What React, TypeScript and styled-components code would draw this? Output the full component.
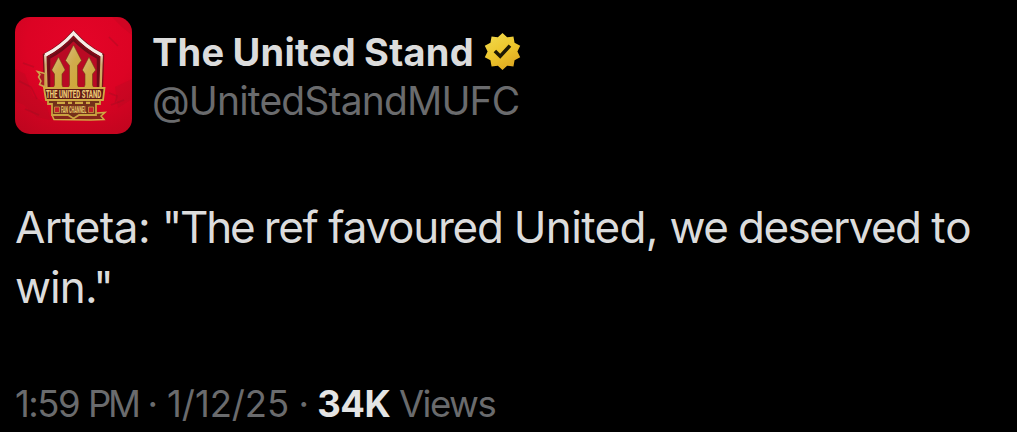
import styled, { createGlobalStyle } from "styled-components";

const GlobalStyle = createGlobalStyle`
    * {
        box-sizing: border-box;
    }
    body {
        margin: 0;
        background-color: #000000;
        font-family: Inter, "Liberation Sans", sans-serif;
    }
`;

const Wrapper = styled.article`
    display: flex;
    flex-direction: column;
    height: 432px;
    padding: 17px 15px 0;
    overflow: hidden;
    background-color: #000000;
    color: #dcdcdc;
`;

const Header = styled.header`
    display: flex;
    align-items: flex-start;
    gap: 20px;
    height: 117px;
`;

const Avatar = styled.div`
    width: 117px;
    height: 117px;
    flex-shrink: 0;
    border-radius: 15px;
    overflow: hidden;
    svg {
        display: block;
    }
`;

const Names = styled.div`
    display: flex;
    flex-direction: column;
    padding-top: 10px;
`;

const NameRow = styled.div`
    display: flex;
    align-items: center;
    gap: 9px;
    height: 50px;
`;

const Name = styled.span`
    font-size: 38px;
    font-weight: 700;
    line-height: 50px;
    letter-spacing: 0.23px;
    word-spacing: -1px;
    white-space: nowrap;
`;

const Badge = styled.svg`
    width: 39px;
    height: 39px;
    margin-bottom: 1px;
`;

const Handle = styled.span`
    color: #6a6b6d;
    font-size: 39px;
    line-height: 48px;
    letter-spacing: -0.83px;
    white-space: nowrap;
`;

const Body = styled.p`
    margin: 63px 0 0;
    font-size: 44px;
    line-height: 60px;
`;

const Line = styled.span`
    display: block;
    white-space: pre;
`;

const Word = styled.span<{ $spacing: number }>`
    letter-spacing: ${({ $spacing }) => $spacing}px;
`;

const Meta = styled.footer`
    display: flex;
    margin-top: 65px;
    color: #6a6b6d;
    font-size: 36.5px;
    line-height: 44px;
    white-space: pre;
`;

const Count = styled.strong`
    color: #e4e4e4;
    font-weight: 700;
    letter-spacing: -0.5px;
`;

// text with its own tracking
const lines = [
    [
        { text: "Arteta: ", spacing: -0.6 },
        { text: '"The ', spacing: -2.2 },
        { text: "ref ", spacing: -1.4 },
        { text: "favoured ", spacing: -1.25 },
        { text: "United, ", spacing: -0.65 },
        { text: "we ", spacing: -1.6 },
        { text: "deserved ", spacing: -1.6 },
        { text: "to", spacing: 0 },
    ],
    [{ text: 'win."', spacing: -0.9 }],
];

function Crest() {
    return (
        <svg width="117" height="117" viewBox="0 0 117 117" aria-hidden="true">
            <defs>
                <radialGradient id="red" cx="0.55" cy="0.25" r="0.9">
                    <stop offset="0" stopColor="#e50428" />
                    <stop offset="0.5" stopColor="#dc0324" />
                    <stop offset="1" stopColor="#bd051e" />
                </radialGradient>
                <linearGradient id="gold" x1="0" y1="0" x2="0.6" y2="1">
                    <stop offset="0" stopColor="#d8bd7c" />
                    <stop offset="0.5" stopColor="#d0ab4c" />
                    <stop offset="1" stopColor="#cfa838" />
                </linearGradient>
                <linearGradient id="edge" x1="0" y1="0" x2="0" y2="1">
                    <stop offset="0" stopColor="#ffffff" />
                    <stop offset="0.35" stopColor="#ead9c8" />
                    <stop offset="0.55" stopColor="#d0ac70" />
                    <stop offset="1" stopColor="#cfa748" />
                </linearGradient>
            </defs>
            <rect width="117" height="117" fill="url(#red)" />
            <path d="M0 52l10 5 8 22 13 8 5 16-14-3L9 88 0 84zM97 0l10 10 10 8V0zM100 70l17-8v20l-14 9z" fill="#ad0b20" opacity="0.25" />
            <path d="M4 64l12 6 6 12M8 46l11 4M94 20l9 9M96 88l13-5M10 92l14 6M94 76l8 3-2 8" stroke="#8f1020" strokeWidth="1.5" opacity="0.3" fill="none" />
            {/* shield */}
            <path d="M31.500 73L30.300 38.500Q46 30.500 58.500 16.500Q71 30.500 86.700 38.500L85.500 73z" fill="#b90a24" stroke="#7a1018" strokeWidth="5" />
            <path d="M34 72V41Q47 34 58.500 22.500Q70 34 83 41v31" fill="none" stroke="#6e0c18" strokeWidth="2.500" />
            <path d="M31.500 73L30.300 38.500Q46 30.500 58.500 16.500Q71 30.500 86.700 38.500L85.500 73" fill="none" stroke="url(#edge)" strokeWidth="2.400" />
            <path d="M30.300 38Q46 30 58.500 16Q71 30 86.700 38" fill="none" stroke="#f6ece6" strokeWidth="3.200" />
            {/* trident */}
            <g fill="url(#gold)" stroke="#6f3a14" strokeWidth="0.6">
                <path d="M43.500 40l6.700 13-3.200 4v11l2 4.500H37.500l2-4.500V57l-2.800-4z" />
                <path d="M58.500 28L66.500 43.500 62.500 48.500V68l2 4.500H52.500l2-4.500V48.500L50.500 43.500z" />
                <path d="M74 40l6.700 13-3.200 4v11l2 4.500H68l2-4.500V57L67.300 53z" />
            </g>
            {/* ribbons */}
            <path d="M22.500 54.500l7.500 2V70l-5.500-2.500 1.500-3.500-2.500-4 1.500-2.500z" fill="#a81c22" stroke="#cda54c" strokeWidth="1.500" />
            <path d="M37 98l2 4.500 37 0.500 13-0.500-3-3.500 4-3.500-8 0.500z" fill="#86261a" stroke="#d0a943" strokeWidth="1.500" />
            <path d="M33 83h52v4h-4v11H64l-5.500 3.500L53 98H37V87h-4z" fill="#74301a" stroke="#c9a13f" strokeWidth="1.800" />
            <path d="M29 71h60.500l-1.500 12H31z" fill="#5f1a14" stroke="#d0a943" strokeWidth="1.800" />
            <text
                transform="translate(31 80.800) scale(0.62 1)"
                fontFamily="Roboto, sans-serif"
                fontSize="10"
                fontWeight="800"
                fill="#edcb77"
                textLength="89"
                lengthAdjust="spacingAndGlyphs"
            >
                THE UNITED STAND
            </text>
            <path d="M42 85.800h34" fill="none" stroke="#d0a943" strokeWidth="2.200" strokeDasharray="8 3 4 3" />
            <path d="M39.500 90h5v5.500h-5zM73.500 90h5v5.500h-5z" fill="#c3202a" stroke="#d0a943" strokeWidth="0.700" />
            <text
                transform="translate(46 96) scale(0.55 1)"
                fontFamily="Roboto, sans-serif"
                fontSize="8.500"
                fontWeight="800"
                fill="#e3c166"
                textLength="46"
                lengthAdjust="spacingAndGlyphs"
            >
                FAN CHANNEL
            </text>
        </svg>
    );
}

function VerifiedBadge() {
    return (
        <Badge viewBox="0 0 22 22" aria-label="Verified">
            <defs>
                <linearGradient id="badge" x1="0.2" y1="0" x2="0.75" y2="1">
                    <stop offset="0" stopColor="#f0d84c" />
                    <stop offset="0.5" stopColor="#edc62c" />
                    <stop offset="1" stopColor="#dda520" />
                </linearGradient>
            </defs>
            <path
                fill="url(#badge)"
                d="M13.596 3.011L11 .5 8.404 3.011l-3.576-.506-.624 3.558-3.190 1.692L2.600 11l-1.586 3.245 3.190 1.692.624 3.558 3.576-.506L11 21.500l2.596-2.511 3.576.506.624-3.558 3.190-1.692L19.400 11l1.586-3.245-3.190-1.692-.624-3.558-3.576.506z"
            />
            <path fill="#1c1804" d="M6 11.390l3.740 3.740 6.200-6.770L14.470 7l-4.800 5.230-2.260-2.260L6 11.390z" />
        </Badge>
    );
}

export default function App() {
    return (
        <>
            <GlobalStyle />
            <Wrapper>
                <Header>
                    <Avatar>
                        <Crest />
                    </Avatar>
                    <Names>
                        <NameRow>
                            <Name>The United Stand</Name>
                            <VerifiedBadge />
                        </NameRow>
                        <Handle>@UnitedStandMUFC</Handle>
                    </Names>
                </Header>
                <Body>
                    {lines.map((words, i) => (
                        <Line key={i}>
                            {words.map(({ text, spacing }) => (
                                <Word key={text} $spacing={spacing}>
                                    {text}
                                </Word>
                            ))}
                        </Line>
                    ))}
                </Body>
                <Meta>
                    <Word $spacing={-1.5}>1:59 </Word>
                    <Word $spacing={-3.2}>PM</Word>
                    <Word $spacing={-0.6}> · </Word>
                    <Word $spacing={-0.1}>1/12/25</Word>
                    <Word $spacing={-1}> · </Word>
                    <Count>34K</Count>
                    <Word $spacing={-1.5}> Views</Word>
                </Meta>
            </Wrapper>
        </>
    );
}
